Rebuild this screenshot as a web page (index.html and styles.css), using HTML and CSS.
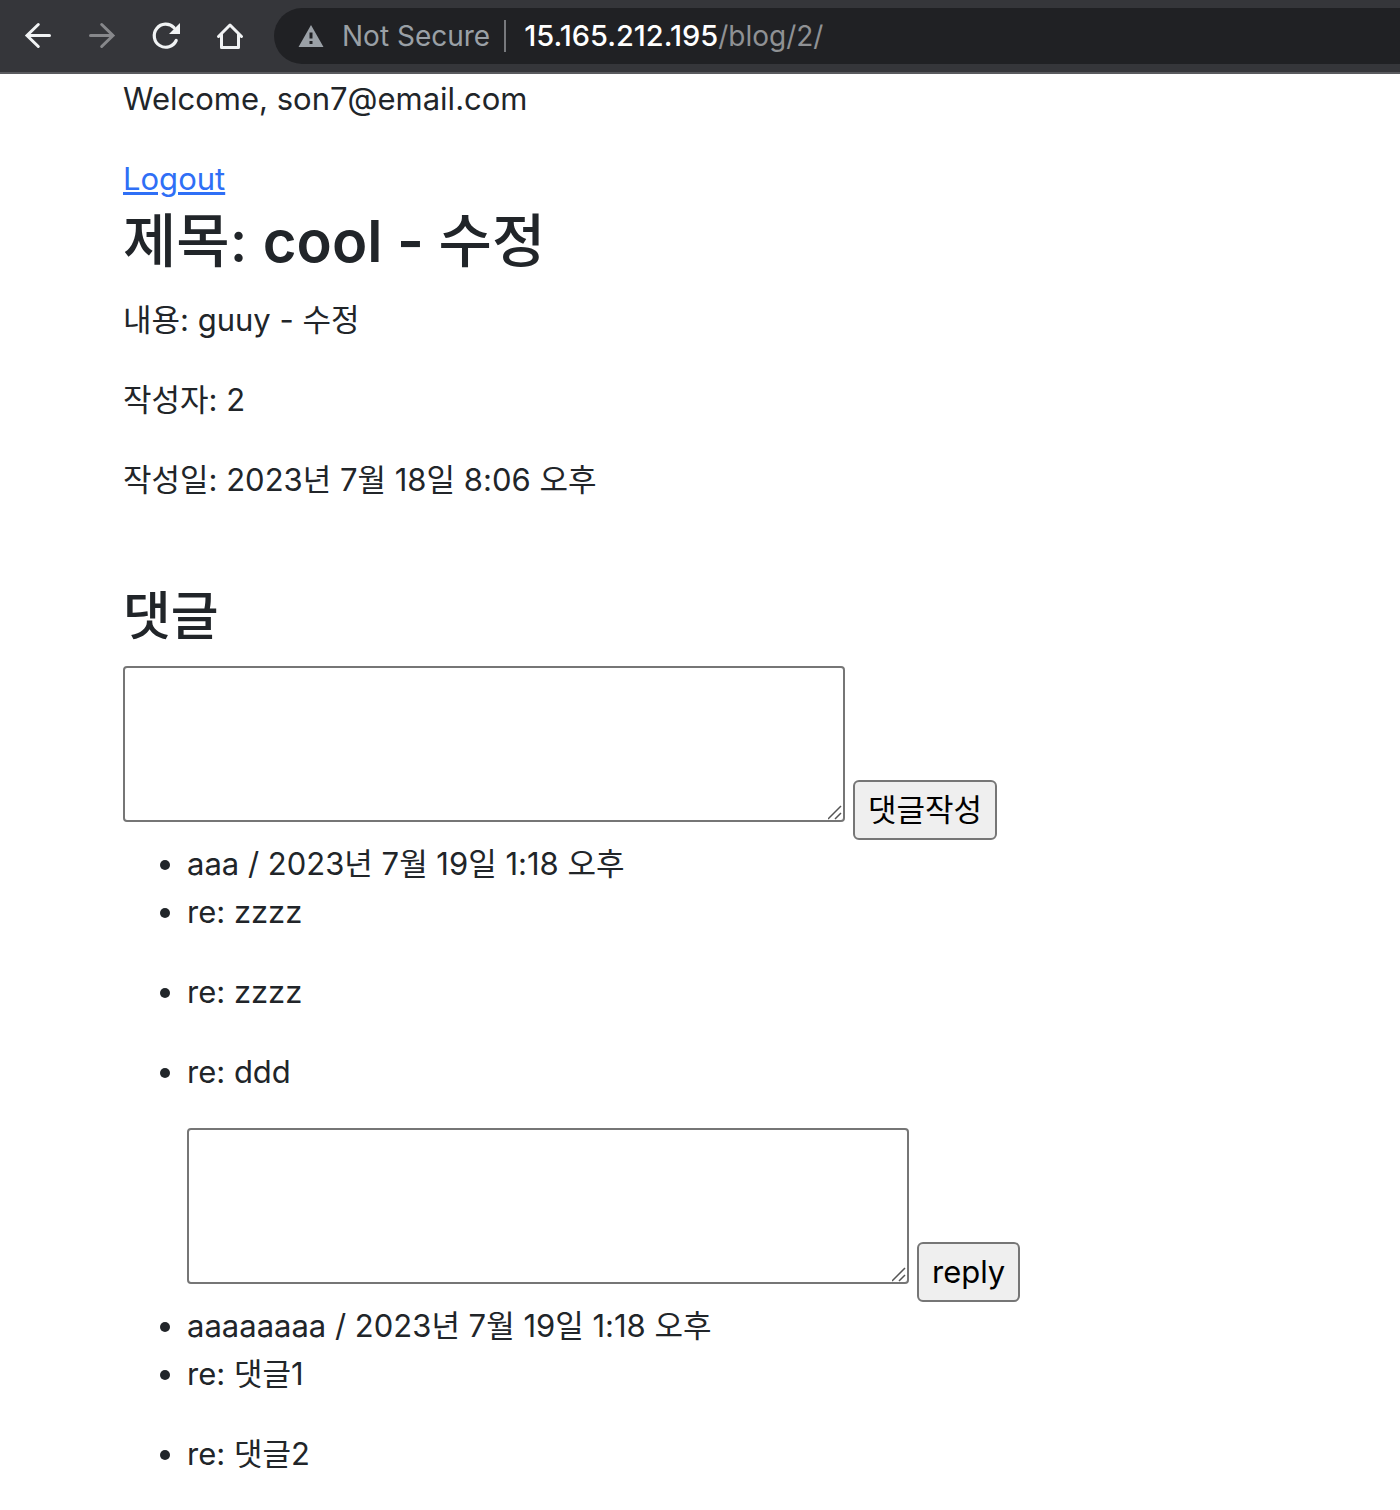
FILE: index.html
```html
<!DOCTYPE html>
<html lang="ko">
<head>
<meta charset="utf-8">
<meta name="viewport" content="width=device-width, initial-scale=1">
<title>cool - 수정</title>
<link rel="stylesheet" href="styles.css">
</head>
<body>
<header class="toolbar">
  <nav class="toolbar-nav" aria-label="Browser">
    <button class="nav-button" type="button" aria-label="Back">
      <svg viewBox="0 0 32 32" fill="none" stroke="#f1f3f4" stroke-width="3" stroke-linecap="round"><path d="M27.500 15.500H5M16.300 4.500L5 15.500L16.300 26.500"/></svg>
    </button>
    <button class="nav-button" type="button" aria-label="Forward" disabled>
      <svg viewBox="0 0 32 32" fill="none" stroke="#87888b" stroke-width="3" stroke-linecap="round"><path d="M4.500 15.500H27M15.700 4.500L27 15.500L15.700 26.500"/></svg>
    </button>
    <button class="nav-button" type="button" aria-label="Reload">
      <svg viewBox="0 0 32 32"><path d="M26.200 20.500A11.500 11.500 0 1 1 24 7.700" fill="none" stroke="#f1f3f4" stroke-width="3.200" stroke-linecap="round"/><path d="M30 3V14H19Z" fill="#f1f3f4"/></svg>
    </button>
    <button class="nav-button" type="button" aria-label="Home">
      <svg viewBox="0 0 32 32" fill="none" stroke="#f1f3f4" stroke-width="3" stroke-linecap="round" stroke-linejoin="round"><path d="M4.500 16.500L16 5L27.500 16.500M7.500 14.500V27.500H24.500V14.500"/></svg>
    </button>
  </nav>
  <div class="address">
    <svg class="warning" viewBox="0 0 26 24"><path fill="#9aa0a6" fill-rule="evenodd" d="M13 1L25.500 23H0.500ZM11.500 8.500V14.500H14.500V8.500ZM11.500 17V20H14.500V17Z"/></svg>
    <span class="security">Not Secure</span>
    <span class="url"><span class="host">15.165.212.195</span>/blog/2/</span>
  </div>
</header>
<main class="container">
  <p>Welcome, son7@email.com</p>
  <a class="logout" href="#">Logout</a>
  <h1>제목: <span class="post-name">cool - </span>수정</h1>
  <p>내용: guuy - 수정</p>
  <p>작성자: 2</p>
  <p>작성일: 2023년 7월 18일 8:06 오후</p>
  <section class="comments">
    <h2>댓글</h2>
    <form class="comment-form">
      <textarea aria-label="댓글"></textarea>
      <button type="button">댓글작성</button>
    </form>
    <ul>
      <li>aaa / 2023년 7월 19일 1:18 오후</li>
      <li><p>re: zzzz</p></li>
      <li><p>re: zzzz</p></li>
      <li>
        <p>re: ddd</p>
        <form class="comment-form">
          <textarea aria-label="reply"></textarea>
          <button type="button">reply</button>
        </form>
      </li>
      <li>aaaaaaaa / 2023년 7월 19일 1:18 오후</li>
      <li><p>re: 댓글1</p></li>
      <li class="last"><p>re: 댓글2</p></li>
    </ul>
  </section>
</main>
</body>
</html>
```
FILE: styles.css
```css
* {
  box-sizing: border-box;
}

body {
  margin: 0;
  background: #fff;
  color: #212529;
  font-family: Inter, "Noto Sans CJK KR", sans-serif;
  font-size: 31px;
  line-height: 48px;
}

.toolbar {
  display: flex;
  align-items: center;
  gap: 12px;
  padding: 8px 0 8px 6px;
  background: #35363a;
  border-bottom: 2px solid #5a5b5f;
}

.toolbar-nav {
  display: flex;
}

.nav-button {
  display: flex;
  align-items: center;
  justify-content: center;
  width: 64px;
  height: 56px;
  padding: 0;
  border: 0;
  background: none;
}

.nav-button svg {
  width: 32px;
  height: 32px;
}

.address {
  display: flex;
  flex: 1;
  align-items: center;
  height: 56px;
  padding-left: 24px;
  border-radius: 28px 0 0 28px;
  background: #202124;
  color: #8f9194;
  font-size: 28px;
  line-height: 32px;
  white-space: nowrap;
}

.warning {
  width: 26px;
  height: 24px;
  margin-right: 18px;
}

.security {
  padding-right: 14px;
  border-right: 2px solid #77797d;
  color: #9aa0a6;
}

.url {
  padding-left: 18px;
}

.host {
  color: #fff;
  font-size: 29px;
  font-weight: 500;
}

.container {
  padding: 1px 123px 0;
}

p {
  margin: 0 0 32px;
}

.logout {
  display: block;
  width: fit-content;
  color: #2f6ff6;
  text-decoration: underline;
  text-decoration-thickness: 3px;
}

h1,
h2 {
  margin: 0 0 16px;
  font-weight: 500;
}

h1 {
  font-size: 58px;
  line-height: 77px;
}

h2 {
  font-size: 52px;
  line-height: 66px;
}

.post-name {
  font-weight: 600;
}

.comments {
  padding-top: 48px;
}

.comment-form {
  display: flex;
  align-items: flex-end;
  gap: 8px;
}

.comment-form textarea {
  flex: 0 1 722px;
  min-width: 0;
  height: 156px;
  margin-bottom: 18px;
  padding: 4px;
  border: 2px solid #767676;
  border-radius: 4px;
  background: #fff;
  font: inherit;
  resize: both;
}

.comment-form textarea::-webkit-resizer {
  background: url("data:image/svg+xml,%3Csvg xmlns='http://www.w3.org/2000/svg' viewBox='0 0 15 15' fill='none' stroke='%23555' stroke-width='1.500'%3E%3Cpath d='M0 14L13 1M7 14L13 8'/%3E%3C/svg%3E") no-repeat center;
}

.comment-form button {
  height: 60px;
  padding: 0 13px;
  border: 2px solid #767676;
  border-radius: 6px;
  background: #efefef;
  color: #000;
  font: inherit;
}

ul {
  margin: 0;
  padding-left: 64px;
}

.last p {
  margin-bottom: 0;
}
```
